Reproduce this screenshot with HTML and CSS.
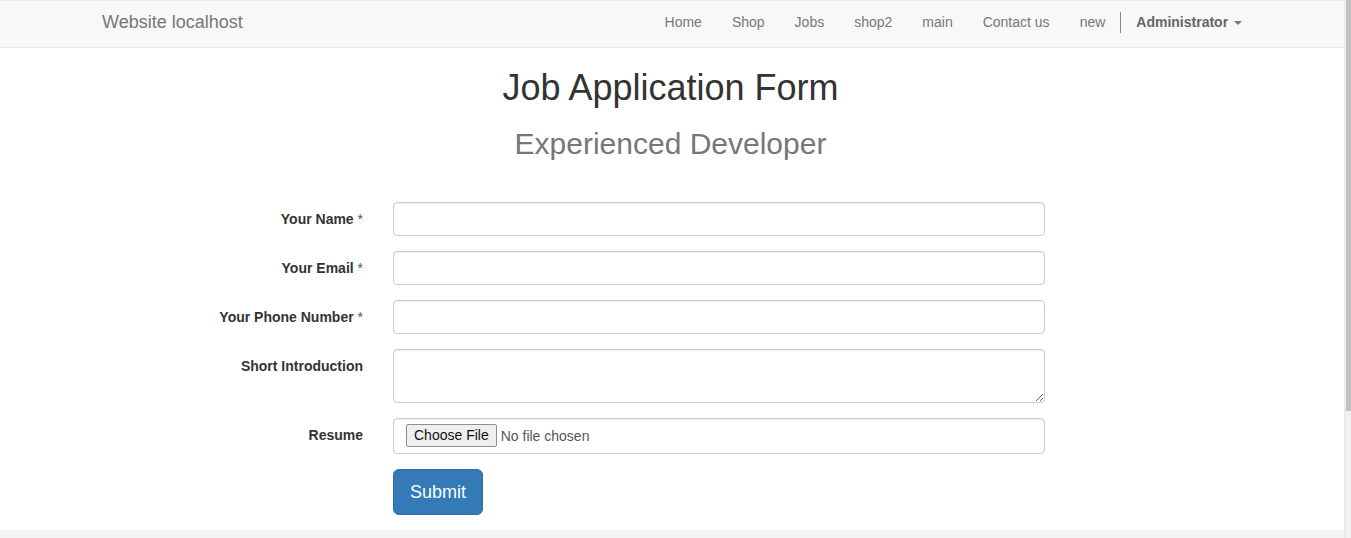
FILE: index.html
```
<!DOCTYPE html>
<html lang="en">
<head>
    <meta charset="UTF-8">
    <meta name="viewport" content="width=device-width, initial-scale=1.0">
    <title>Job Application Form</title>
    <link rel="stylesheet" href="styles.css">
</head>
<body>
<div class="page">
    <nav class="navbar">
        <div class="container nav-inner">
            <a class="brand" href="#">Website localhost</a>
            <ul class="nav">
                <li><a href="#">Home</a></li>
                <li><a href="#">Shop</a></li>
                <li><a href="#">Jobs</a></li>
                <li><a href="#">shop2</a></li>
                <li><a href="#">main</a></li>
                <li><a href="#">Contact us</a></li>
                <li><a href="#">new</a></li>
                <li class="divider"></li>
                <li><a class="admin" href="#">Administrator <span class="caret"></span></a></li>
            </ul>
        </div>
    </nav>

    <div class="container content">
        <h1>Job Application Form</h1>
        <h2>Experienced Developer</h2>

        <form class="form" action="#" method="post">
            <div class="form-group">
                <label class="col-label" for="name">Your Name <span class="req">*</span></label>
                <div class="col-field"><input class="form-control" type="text" id="name"></div>
            </div>
            <div class="form-group">
                <label class="col-label" for="email">Your Email <span class="req">*</span></label>
                <div class="col-field"><input class="form-control" type="email" id="email"></div>
            </div>
            <div class="form-group">
                <label class="col-label" for="phone">Your Phone Number <span class="req">*</span></label>
                <div class="col-field"><input class="form-control" type="text" id="phone"></div>
            </div>
            <div class="form-group">
                <label class="col-label" for="intro">Short Introduction</label>
                <div class="col-field"><textarea class="form-control" id="intro" rows="2"></textarea></div>
            </div>
            <div class="form-group">
                <label class="col-label" for="resume">Resume</label>
                <div class="col-field"><input class="form-control file" type="file" id="resume"></div>
            </div>
            <div class="form-group">
                <div class="col-label"></div>
                <div class="col-field"><button class="btn-submit" type="submit">Submit</button></div>
            </div>
        </form>
    </div>

    <div class="footer"></div>
</div>
<div class="scrollbar"><div class="thumb"></div></div>
</body>
</html>
```

FILE: styles.css
```
html, body {
    height: 100%;
}

body {
    margin: 0;
    display: flex;
    overflow: hidden;
    font-family: "Liberation Sans", Arial, sans-serif;
    font-size: 14px;
    line-height: 20px;
    color: #333;
    background: #fff;
}

.page {
    flex: 1;
    overflow: hidden;
    padding-right: 3px;
    border-top: 1px solid #e9e9e9;
}

.container {
    width: 1170px;
    margin: 0 auto;
    padding: 0 15px;
    box-sizing: border-box;
}

/* navbar */
.navbar {
    margin: -5px -3px 0 0;
    height: 50px;
    background: #f8f8f8;
    border: 1px solid #e7e7e7;
    border-left: none;
    border-right: none;
}

.nav-inner {
    display: flex;
    justify-content: space-between;
    align-items: center;
}

.brand {
    margin-left: -15px;
    padding: 15px;
    font-size: 18px;
    line-height: 20px;
    color: #777;
    text-decoration: none;
}

.nav {
    display: flex;
    align-items: center;
    list-style: none;
    margin: 0 -15px 0 0;
    padding: 0;
}

.nav a {
    display: block;
    padding: 15px;
    color: #777;
    text-decoration: none;
}

.nav .divider {
    width: 1px;
    height: 21px;
    background: #8a8a8a;
}

.nav .admin {
    font-weight: bold;
    color: #666;
}

.caret {
    display: inline-block;
    width: 0;
    height: 0;
    margin-left: 2px;
    vertical-align: middle;
    border-top: 4px solid #777;
    border-left: 4px solid transparent;
    border-right: 4px solid transparent;
}

/* headings */
h1 {
    margin: 20px 0 0;
    font-size: 36px;
    line-height: 1.1;
    font-weight: 500;
    text-align: center;
    color: #333;
}

h2 {
    margin: 19px 0 0;
    font-size: 30px;
    line-height: 1.1;
    font-weight: 500;
    text-align: center;
    color: #777;
}

/* form */
.form {
    margin: 0 -15px;
    padding-top: 42px;
}

.form-group {
    display: flex;
    margin-bottom: 15px;
}

.col-label {
    width: 25%;
    padding: 7px 15px 0;
    box-sizing: border-box;
    text-align: right;
    font-weight: bold;
    color: #333;
}

.req {
    font-weight: normal;
    color: #555;
}

.col-field {
    width: 58.3333%;
    padding: 0 15px;
    box-sizing: border-box;
}

.form-control {
    display: block;
    width: 100%;
    height: 34px;
    padding: 6px 12px;
    box-sizing: border-box;
    font-family: "Liberation Sans", Arial, sans-serif;
    font-size: 14px;
    line-height: 20px;
    color: #555;
    background: #fff;
    border: 1px solid #ccc;
    border-radius: 4px;
    box-shadow: inset 0 1px 1px rgba(0, 0, 0, .075);
    outline: none;
}

textarea.form-control {
    height: 54px;
    resize: vertical;
}

.form-control.file {
    height: 36px;
    padding: 5px 12px;
}

.form-control.file::file-selector-button {
    height: 23px;
    margin-right: 4px;
    padding: 0 7px;
    font-family: "Liberation Sans", Arial, sans-serif;
    font-size: 14px;
    color: #111;
    background: #efefef;
    border: 1px solid #8f8f8f;
    border-radius: 2px;
}

.btn-submit {
    height: 46px;
    padding: 10px 16px;
    font-family: "Liberation Sans", Arial, sans-serif;
    font-size: 18px;
    line-height: 24px;
    color: #fff;
    background: #337ab7;
    border: 1px solid #2e6da4;
    border-radius: 6px;
}

.footer {
    height: 40px;
    margin-right: -3px;
    background: #f5f5f5;
}

/* fake window scrollbar */
.scrollbar {
    width: 6px;
    border-left: 1px solid #e6e6e6;
    background: #f1f1f1;
    display: flex;
    justify-content: flex-end;
}

.thumb {
    width: 5px;
    height: 411px;
    background: #c1c1c1;
}
```
